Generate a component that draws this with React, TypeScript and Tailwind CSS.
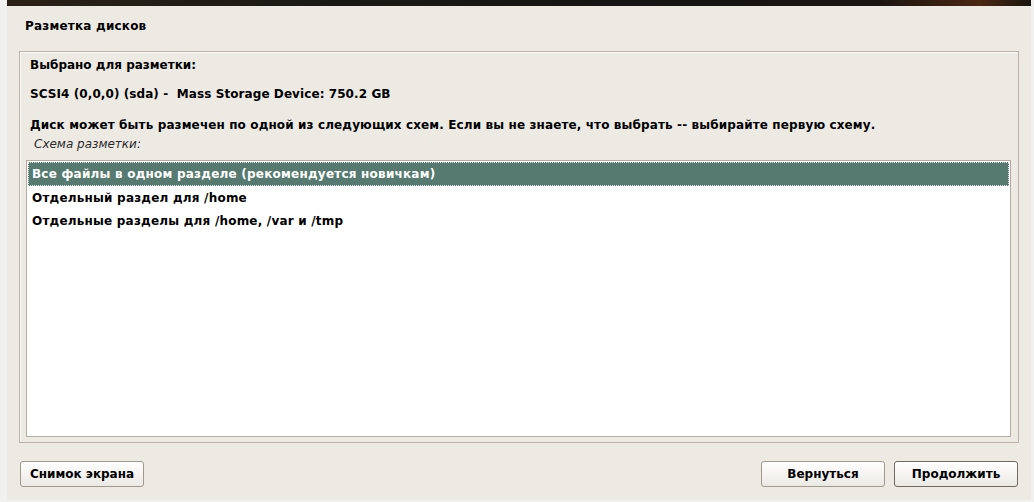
export default function App() {
  const rows = [
    "Все файлы в одном разделе (рекомендуется новичкам)",
    "Отдельный раздел для /home",
    "Отдельные разделы для /home, /var и /tmp",
  ];

  return (
    <div className="flex h-[502px] w-[1034px] bg-[#f1f1f0] font-['DejaVu_Sans',sans-serif] text-[12px] text-black">
      <div className="w-[7px] shrink-0" />
      <div className="flex h-[500px] w-[1024px] shrink-0 flex-col bg-[#edeae4]">
        {/* top banner */}
        <div className="h-[6px] bg-[linear-gradient(90deg,#2a2118_0%,#1a1a14_30%,#141414_60%,#1a1511_85%,#4a2612_95%,#1a1511_100%)]" />

        <div className="px-[18px] pt-[12px] font-bold leading-[16px] tracking-[0.2px]">Разметка дисков</div>

        {/* frame */}
        <div className="mx-[12px] mt-[17px] flex h-[392px] flex-col border border-[#bcb3a6] shadow-[inset_1px_1px_0_#faf8f5]">
          <div className="px-[10px] pt-[5px] font-bold leading-[16px]">Выбрано для разметки:</div>
          <div className="mt-[13px] px-[10px] font-bold leading-[16px] tracking-[0.08px] whitespace-pre">
            SCSI4 (0,0,0) (sda) -  Mass Storage Device: 750.2 GB
          </div>
          <div className="mt-[15px] px-[10px] font-bold leading-[16px] tracking-[0.12px]">
            Диск может быть размечен по одной из следующих схем. Если вы не знаете, что выбрать -- выбирайте первую схему.
          </div>
          <div className="mt-[3px] px-[14px] italic leading-[16px] text-[#2b2b2b]">Схема разметки:</div>

          <div className="mb-[5px] ml-[6px] mr-[7px] mt-[8px] flex flex-1 flex-col border border-[#b5ab9d] bg-white p-px">
            {rows.map((r, i) => (
              <div
                key={r}
                className={
                  i === 0
                    ? "flex h-[24px] items-center border border-dotted border-[#dfe8e4] bg-[#577a70] px-[3px] font-bold tracking-[0.22px] text-white"
                    : "flex h-[23px] items-center px-[4px] font-bold tracking-[0.2px]"
                }
              >
                {r}
              </div>
            ))}
          </div>
        </div>

        {/* buttons */}
        <div className="mt-[18px] flex items-center px-[13px]">
          <button className="h-[26px] w-[124px] rounded-[3px] border border-[#a09a8e] bg-[linear-gradient(#ffffff,#ebe9e4)] font-bold">
            Снимок экрана
          </button>
          <div className="flex-1" />
          <button className="h-[26px] w-[124px] rounded-[3px] border border-[#a09a8e] bg-[linear-gradient(#ffffff,#ebe9e4)] font-bold">
            Вернуться
          </button>
          <button className="ml-[9px] h-[26px] w-[124px] rounded-[3px] border border-[#6f6a62] bg-[linear-gradient(#ffffff,#ebe9e4)] font-bold">
            Продолжить
          </button>
        </div>
      </div>
      <div className="w-[3px] shrink-0" />
    </div>
  );
}
